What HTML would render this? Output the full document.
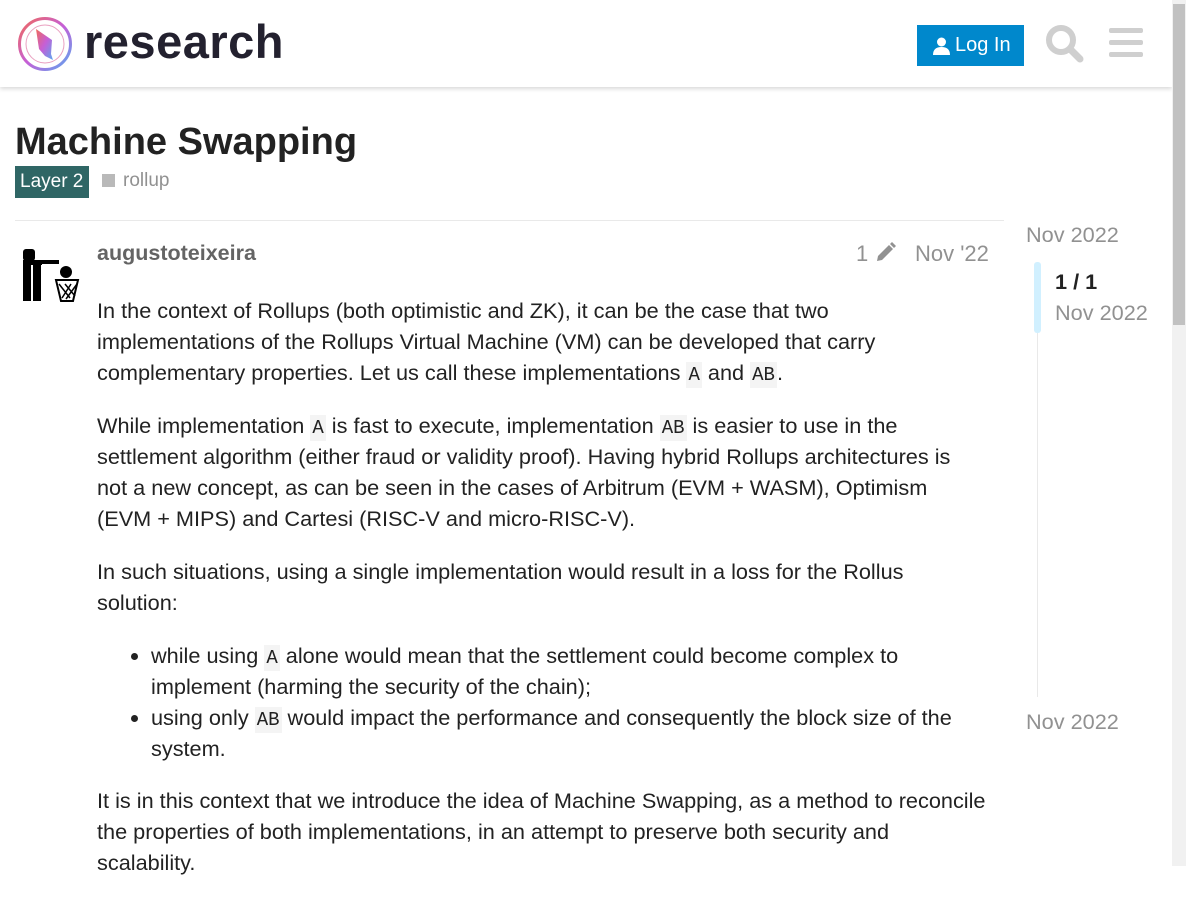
<!DOCTYPE html>
<html><head><meta charset="utf-8"><style>
*{box-sizing:border-box;margin:0;padding:0}
body{width:1186px;height:866px;overflow:hidden;background:#fff;font-family:"Liberation Sans",sans-serif;color:#222;position:relative}
.hdr{position:absolute;left:0;top:0;width:1172px;height:87px;background:#fff;box-shadow:0 2px 4px rgba(0,0,0,.15)}
.logo{position:absolute;left:84px;top:14px;font-size:47px;font-weight:bold;color:#23212f;letter-spacing:0.5px}
.btn{position:absolute;left:917px;top:25px;width:107px;height:41px;background:#0088cc;color:#fff;font-size:20px;line-height:41px;padding-left:38px}
.sb{position:absolute;left:1172px;top:0;width:14px;height:866px;background:#f1f1f1}
.sb div{position:absolute;left:1px;top:4px;width:12px;height:321px;background:#c1c1c1}
h1{position:absolute;left:15px;top:121px;font-size:38px;font-weight:bold;color:#222}
.cat{position:absolute;left:15px;top:166px;height:32px;width:74px;background:#2f6665;color:#fff;font-size:19px;line-height:32px;padding:0 5px}
.tag{position:absolute;left:102px;top:170px;font-size:19px;color:#919191}
.tag span{display:inline-block;width:13px;height:13px;background:#b9b9b9;margin-right:8px;vertical-align:-1px}
.line{position:absolute;left:15px;top:220px;width:989px;height:1px;background:#e9e9e9}
.name{position:absolute;left:97px;top:241px;font-size:21.5px;font-weight:bold;color:#646464}
.meta{position:absolute;top:241px;font-size:22px;color:#919191}
.post{position:absolute;left:97px;top:295px;width:960px;font-size:21.7px;line-height:31px;color:#222;white-space:nowrap}
.post p{margin-bottom:22px}
code{font-family:"Liberation Mono",monospace;font-size:19px;line-height:1;background:#f4f4f4;padding:2px 2px}
ul{padding-left:54px;margin-bottom:21px}
.tl{position:absolute;font-size:21.7px;color:#919191}
</style></head><body>
<div class="hdr">
<svg style="position:absolute;left:17px;top:16px" width="56" height="56" viewBox="0 0 56 56">
<defs><linearGradient id="g" x1="0" y1="0" x2="1" y2="1"><stop offset="0" stop-color="#f06a5a"/><stop offset=".5" stop-color="#c65fd6"/><stop offset="1" stop-color="#5aa8f0"/></linearGradient></defs>
<circle cx="28" cy="28" r="25.5" fill="none" stroke="url(#g)" stroke-width="3"/>
<circle cx="28" cy="28" r="19" fill="none" stroke="#e9a0c0" stroke-width="1"/>
<path d="M19 13 L35 24 L34 38 L36 44 L28 40 L22 33Z" fill="url(#g)"/>
</svg>
<div class="logo">research</div>
<div class="btn"><svg style="position:absolute;left:16px;top:12px" width="17" height="18" viewBox="0 0 17 18"><circle cx="8.5" cy="5" r="4.5" fill="#fff"/><path d="M0 18 Q0 10 8.5 10 Q17 10 17 18Z" fill="#fff"/></svg>Log In</div>
<svg style="position:absolute;left:1045px;top:24px" width="40" height="40" viewBox="0 0 40 40"><circle cx="16" cy="16" r="12" fill="none" stroke="#cfcfcf" stroke-width="6"/><path d="M25 25 L35 35" stroke="#cfcfcf" stroke-width="7" stroke-linecap="round"/></svg>
<div style="position:absolute;left:1109px;top:28px;width:34px;height:5px;background:#cfcfcf;border-radius:2px"></div>
<div style="position:absolute;left:1109px;top:40px;width:34px;height:5px;background:#cfcfcf;border-radius:2px"></div>
<div style="position:absolute;left:1109px;top:52px;width:34px;height:5px;background:#cfcfcf;border-radius:2px"></div>
</div>
<div class="sb"><div></div></div>
<h1>Machine Swapping</h1>
<div class="cat">Layer 2</div>
<div class="tag"><span></span>rollup</div>
<div class="line"></div>
<svg style="position:absolute;left:20px;top:246px" width="62" height="58" viewBox="0 0 62 58">
<rect x="3" y="3" width="12" height="12" rx="3" fill="#000"/>
<rect x="3" y="14" width="19" height="5" fill="#000"/>
<rect x="12" y="14" width="27" height="4" fill="#000"/>
<rect x="3" y="18" width="8" height="37" fill="#000"/>
<rect x="13" y="18" width="8" height="37" fill="#000"/>
<circle cx="46" cy="26" r="6" fill="#000"/>
<path d="M36 34 H58 L53 55 H41Z" fill="none" stroke="#000" stroke-width="2"/>
<path d="M39 38 L50 52 M45 38 L55 50 M51 38 L42 52 M57 38 L46 53" stroke="#000" stroke-width="1.5"/>
</svg>
<div class="name">augustoteixeira</div>
<div class="meta" style="left:856px">1 <svg width="22" height="22" viewBox="0 0 22 22" style="vertical-align:-3px"><path d="M3 19 L4 14 L15 3 L19 7 L8 18Z M16 2 L18 0 L22 4 L20 6Z" fill="#919191"/></svg></div>
<div class="meta" style="left:915px">Nov '22</div>
<div class="post">
<p>In the context of Rollups (both optimistic and ZK), it can be the case that two<br>implementations of the Rollups Virtual Machine (VM) can be developed that carry<br>complementary properties. Let us call these implementations <code>A</code> and <code>AB</code>.</p>
<p>While implementation <code>A</code> is fast to execute, implementation <code>AB</code> is easier to use in the<br>settlement algorithm (either fraud or validity proof). Having hybrid Rollups architectures is<br>not a new concept, as can be seen in the cases of Arbitrum (EVM + WASM), Optimism<br>(EVM + MIPS) and Cartesi (RISC-V and micro-RISC-V).</p>
<p>In such situations, using a single implementation would result in a loss for the Rollus<br>solution:</p>
<ul><li>while using <code>A</code> alone would mean that the settlement could become complex to<br>implement (harming the security of the chain);</li>
<li>using only <code>AB</code> would impact the performance and consequently the block size of the<br>system.</li></ul>
<p>It is in this context that we introduce the idea of Machine Swapping, as a method to reconcile<br>the properties of both implementations, in an attempt to preserve both security and<br>scalability.</p>
</div>
<div class="tl" style="left:1026px;top:222px">Nov 2022</div>
<div style="position:absolute;left:1037px;top:262px;width:1px;height:435px;background:#e9e9e9"></div>
<div style="position:absolute;left:1034px;top:262px;width:7px;height:71px;background:#d1f0ff;border-radius:3px"></div>
<div style="position:absolute;left:1055px;top:269px;font-size:21.7px;font-weight:bold;color:#222">1 / 1</div>
<div class="tl" style="left:1055px;top:300px">Nov 2022</div>
<div class="tl" style="left:1026px;top:709px">Nov 2022</div>
</body></html>
